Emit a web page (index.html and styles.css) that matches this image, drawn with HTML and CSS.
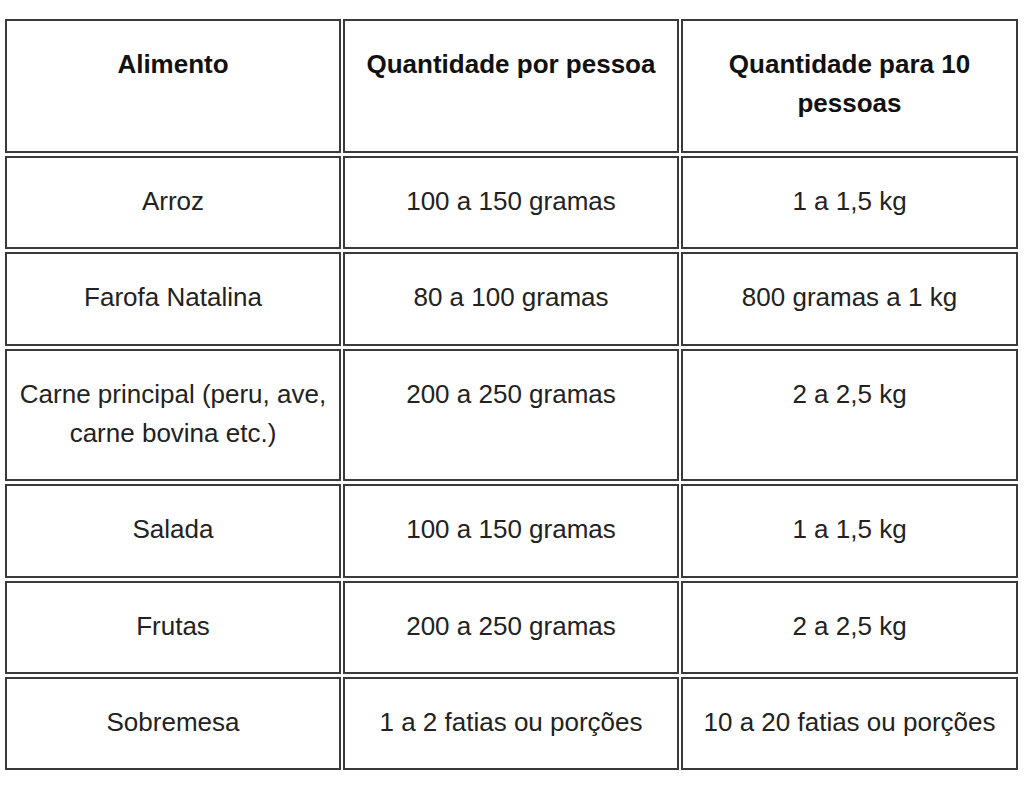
FILE: index.html
```html
<!DOCTYPE html>
<html lang="pt">
<head>
<meta charset="utf-8">
<title>Quantidades</title>
<link rel="stylesheet" href="styles.css">
</head>
<body>
<table class="food-table">
  <colgroup>
    <col class="c1"><col class="c2"><col class="c3">
  </colgroup>
  <thead>
    <tr class="head-row">
      <th>Alimento</th>
      <th>Quantidade por pessoa</th>
      <th>Quantidade para 10 pessoas</th>
    </tr>
  </thead>
  <tbody>
    <tr>
      <td>Arroz</td>
      <td>100 a 150 gramas</td>
      <td>1 a 1,5 kg</td>
    </tr>
    <tr>
      <td>Farofa Natalina</td>
      <td>80 a 100 gramas</td>
      <td>800 gramas a 1 kg</td>
    </tr>
    <tr>
      <td>Carne principal (peru, ave, carne bovina etc.)</td>
      <td>200 a 250 gramas</td>
      <td>2 a 2,5 kg</td>
    </tr>
    <tr>
      <td>Salada</td>
      <td>100 a 150 gramas</td>
      <td>1 a 1,5 kg</td>
    </tr>
    <tr>
      <td>Frutas</td>
      <td>200 a 250 gramas</td>
      <td>2 a 2,5 kg</td>
    </tr>
    <tr>
      <td>Sobremesa</td>
      <td>1 a 2 fatias ou porções</td>
      <td>10 a 20 fatias ou porções</td>
    </tr>
  </tbody>
</table>
</body>
</html>
```

FILE: styles.css
```css
html, body {
  margin: 0;
  padding: 0;
  background: #ffffff;
}

body {
  font-family: "Liberation Sans", Arial, sans-serif;
  color: #222222;
}

.food-table {
  margin: 16px 0 0 3px;
  border-collapse: separate;
  border-spacing: 2px 3px;
  table-layout: fixed;
  width: 1015px;
}

.c1 { width: 336px; }
.c2 { width: 336px; }
.c3 { width: 337px; }

.food-table th,
.food-table td {
  border: 2px solid #3a3a3a;
  padding: 24px 6px 26.4px;
  font-size: 26px;
  line-height: 39px;
  text-align: center;
  vertical-align: top;
}

.food-table th {
  font-weight: bold;
  color: #111111;
  padding-bottom: 28px;
}
```
